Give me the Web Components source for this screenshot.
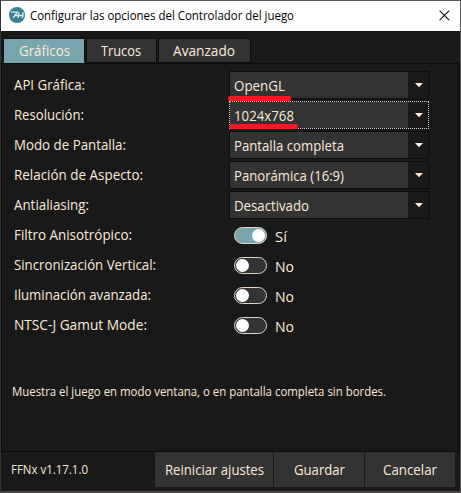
<!DOCTYPE html>
<html lang="es"><head><meta charset="utf-8"><title>Configurar las opciones del Controlador del juego</title>
<style>
html,body{margin:0;height:100%;overflow:hidden;background:#191919}
body{font-family:"Open Sans","Noto Sans",sans-serif;font-size:14px;color:#fbeadb}
</style></head><body>
<game-settings></game-settings>
<script>
const define=(name,html,init)=>customElements.define(name,class extends HTMLElement{
  connectedCallback(){
    if(this.shadowRoot)return;
    const t=document.createElement('template');t.innerHTML=html;
    this.attachShadow({mode:'open'}).append(t.content.cloneNode(true));
    if(init)init(this,this.shadowRoot);
  }
});

// Single line of text, condensed or widened to the width given in "w".
define('fit-text',`<style>
:host{display:inline-block;white-space:nowrap;line-height:18px;height:18px}
span{display:inline-block;transform-origin:0 0}
</style><span><slot></slot></span>`,(el,r)=>{
  const s=r.querySelector('span'),w=+el.getAttribute('w');
  const k=w/s.getBoundingClientRect().width;
  el.style.width=w+'px';s.style.transform=`scaleX(${k})`;
});

define('title-bar',`<style>
:host{display:flex;align-items:center;height:30px;background:#fff;color:#000;font-size:12px;padding:0 10px 0 8px;box-sizing:border-box}
.logo{flex:none;margin:0 5px 2px 0}
.close{margin:0 0 2px auto}
</style>
<svg class="logo" width="16" height="16" viewBox="0 0 16 16"><circle cx="8" cy="8" r="8" fill="#388292"/><path d="M2 5.2h6.4L4 11M6 8.5h8.6M9.9 5.2L9.2 11M14.2 5.2L13.4 11" fill="none" stroke="#d9eaed" stroke-width="1.3"/></svg>
<slot></slot>
<svg class="close" width="11" height="11" viewBox="0 0 11 11"><path d="M.6.6l9.6 9.6M10.2.6L.6 10.2" stroke="#111" stroke-width="1.1"/></svg>`);

define('tab-item',`<style>
:host{display:flex;justify-content:center;align-items:center;box-sizing:border-box;height:25px;border:1px solid #0e0e0e;background:#333;padding-right:2px}
:host([active]){background:#78a5ae;border-color:#0e0e0e;border-bottom-color:#78a5ae;padding:1px 0 0}
</style><slot></slot>`);

define('setting-row',`<style>
:host{display:grid;grid-template-columns:215px 200px;height:30px;align-items:start}
.label{padding-top:4px;height:18px}
</style><div class="label"><slot name="label"></slot></div><slot></slot>`);

define('combo-box',`<style>
:host{display:flex;position:relative;box-sizing:border-box;width:200px;height:28px;border:1px solid #0c0c0c;background:#191919}
:host([focused]){border:1px dotted #d8cabd}
.value{box-sizing:border-box;width:178px;background:#333;padding:4px 0 0 4px}
.arrow{margin:11px 0 0 7px}
.mark{position:absolute;height:5px;border-radius:2px;background:#ed1c24;display:none}
:host([mark=api]) .mark{display:block;left:-2px;top:24px;width:63px}
:host([mark=res]) .mark{display:block;left:-1px;top:22px;width:69px}
</style><div class="value"><slot></slot></div>
<svg class="arrow" width="8" height="5" viewBox="0 0 8 5"><path d="M0 0h8L4 4.2z" fill="#ffe9d9"/></svg><i class="mark"></i>`);

define('toggle-switch',`<style>
:host{display:flex;padding:6px 0 0 5px;height:22px}
.track{box-sizing:border-box;width:33px;height:17px;border:1px solid #e2d3c5;border-radius:9px;background:#333;padding:1px}
.knob{width:13px;height:13px;border-radius:50%;background:#fff}
:host([on]) .track{background:#78a5ae}
:host([on]) .knob{margin-left:16px}
.text{padding:0 0 0 8px}
</style><div class="track"><div class="knob"></div></div><div class="text"><slot></slot></div>`);

define('action-button',`<style>
:host{display:flex;align-items:center;justify-content:center;height:35px;background:#333;box-sizing:border-box}
</style><slot></slot>`);

define('game-settings',`<style>
:host{display:flex;flex-direction:column;box-sizing:border-box;width:461px;height:493px;border:1px solid #5b585b;border-left-color:#333;border-bottom:2px solid #4a464a;background:#191919}
.tabs{display:flex;gap:1px;height:32px;padding:7px 0 0 2px;box-sizing:border-box}
.page{height:389px;box-sizing:border-box;border:1px solid #0b0b0b;padding:7px 0 0 12px;display:flex;flex-direction:column}
.help{font-size:12px;margin:42px 0 0 -2px}
.foot{display:flex;gap:1px;padding:0 4px 0 10px;height:38px}
.version{font-size:12px;width:143px;padding-top:9px}
</style>
<title-bar><fit-text w="264">Configurar las opciones del Controlador del juego</fit-text></title-bar>
<div class="tabs">
<tab-item active style="width:82px"><fit-text w="51">Gráficos</fit-text></tab-item>
<tab-item style="width:71px"><fit-text w="40">Trucos</fit-text></tab-item>
<tab-item style="width:93px"><fit-text w="62">Avanzado</fit-text></tab-item>
</div>
<div class="page">
<setting-row><fit-text slot="label" w="71">API Gráfica:</fit-text><combo-box mark="api"><fit-text w="51">OpenGL</fit-text></combo-box></setting-row>
<setting-row><fit-text slot="label" w="70">Resolución:</fit-text><combo-box focused mark="res"><fit-text w="60">1024x768</fit-text></combo-box></setting-row>
<setting-row><fit-text slot="label" w="112">Modo de Pantalla:</fit-text><combo-box><fit-text w="110">Pantalla completa</fit-text></combo-box></setting-row>
<setting-row><fit-text slot="label" w="129">Relación de Aspecto:</fit-text><combo-box><fit-text w="110">Panorámica (16:9)</fit-text></combo-box></setting-row>
<setting-row><fit-text slot="label" w="75">Antialiasing:</fit-text><combo-box><fit-text w="75">Desactivado</fit-text></combo-box></setting-row>
<setting-row><fit-text slot="label" w="118">Filtro Anisotrópico:</fit-text><toggle-switch on><fit-text w="12">Sí</fit-text></toggle-switch></setting-row>
<setting-row><fit-text slot="label" w="142">Sincronización Vertical:</fit-text><toggle-switch><fit-text w="19">No</fit-text></toggle-switch></setting-row>
<setting-row><fit-text slot="label" w="137">Iluminación avanzada:</fit-text><toggle-switch><fit-text w="19">No</fit-text></toggle-switch></setting-row>
<setting-row><fit-text slot="label" w="133">NTSC-J Gamut Mode:</fit-text><toggle-switch><fit-text w="19">No</fit-text></toggle-switch></setting-row>
<div class="help"><fit-text w="374">Muestra el juego en modo ventana, o en pantalla completa sin bordes.</fit-text></div>
</div>
<div class="foot"><div class="version"><fit-text w="77">FFNx v1.17.1.0</fit-text></div>
<action-button style="width:118px"><fit-text w="99">Reiniciar ajustes</fit-text></action-button>
<action-button style="width:90px"><fit-text w="51">Guardar</fit-text></action-button>
<action-button style="width:90px"><fit-text w="54">Cancelar</fit-text></action-button></div>`);
</script></body></html>
